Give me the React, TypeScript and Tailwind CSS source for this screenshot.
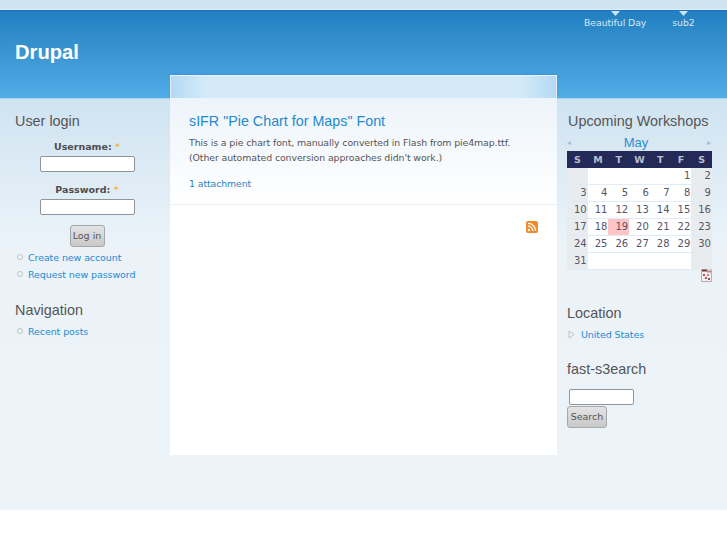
import React from "react";

const sans = "font-['Liberation_Sans',Arial,sans-serif]";
const dj = "font-['DejaVu_Sans',Verdana,sans-serif]";

function Bullet({ tri }: { tri?: boolean }) {
  return tri ? (
    <svg width="7" height="9" viewBox="0 0 7 9" className="shrink-0">
      <path d="M1 1 L6 4.5 L1 8 Z" fill="#f4f7f9" stroke="#b8c0c6" strokeWidth="1" />
    </svg>
  ) : (
    <span className="block w-[6px] h-[6px] rounded-full border border-[#bcc4c8] bg-[#eef4f8] shrink-0 -mt-[1px]" />
  );
}

function LinkItem({ children, tri }: { children: React.ReactNode; tri?: boolean }) {
  return (
    <div className="flex items-center h-[17px] pb-[1px]">
      <div className={tri ? "w-[13px] flex justify-start" : "w-[13px] flex justify-start pl-[2px]"}><Bullet tri={tri} /></div>
      <a className="text-[#1f8ad2] text-[9.5px] tracking-[-0.1px] leading-[15px] whitespace-nowrap">{children}</a>
    </div>
  );
}

function Heading({ children, cls = "" }: { children: React.ReactNode; cls?: string }) {
  return <h2 className={`${sans} text-[14.4px] leading-[18px] text-[#555] whitespace-nowrap ${cls}`}>{children}</h2>;
}

function Nav({ label, cls = "" }: { label: string; cls?: string }) {
  return (
    <div className={`flex flex-col items-center w-max ${cls}`}>
      <svg width="9" height="5" viewBox="0 0 9 5">
        <path d="M0 0 H9 L4.5 5 Z" fill="#cfe3f1" />
      </svg>
      <span className={`${dj} text-[9.3px] tracking-[-0.05px] leading-[13px] text-[#d6e8f5] whitespace-nowrap`}>{label}</span>
    </div>
  );
}

const weeks: (number | null)[][] = [
  [null, null, null, null, null, 1, 2],
  [3, 4, 5, 6, 7, 8, 9],
  [10, 11, 12, 13, 14, 15, 16],
  [17, 18, 19, 20, 21, 22, 23],
  [24, 25, 26, 27, 28, 29, 30],
  [31, null, null, null, null, null, null],
];

function Calendar() {
  return (
    <div className="w-[145px] ml-[10px]">
      <div className="flex items-center justify-between h-[17px]">
        <span className="text-[#9cc4de] text-[8px]">◂</span>
        <span className={`${sans} text-[#2a8fd0] text-[13px] leading-[17px] mr-[6px]`}>May</span>
        <span className="text-[#9cc4de] text-[8px] mr-[1px]">▸</span>
      </div>
      <div className="grid grid-cols-7 bg-[#232a58] h-[17px]">
        {["S", "M", "T", "W", "T", "F", "S"].map((d, i) => (
          <div key={i} className="text-center text-[9.5px] font-bold leading-[17px] text-[#b9bdcf]">{d}</div>
        ))}
      </div>
      {weeks.map((w, r) => (
        <div key={r} className="grid grid-cols-7 h-[17px] border-b border-[#dfecf6]">
          {w.map((d, i) => (
            <div
              key={i}
              className={`text-right pr-[1px] text-[10px] leading-[16px] text-[#55556a] ${
                d === 19 ? "bg-[#ffc4c4]" : i === 0 || i === 6 ? "bg-[#e9ecef]" : "bg-white"
              }`}
            >
              {d}
            </div>
          ))}
        </div>
      ))}
    </div>
  );
}

function IcalIcon() {
  return (
    <svg width="11" height="13" viewBox="0 0 11 13">
      <rect x="0.5" y="1" width="10" height="11.5" fill="#f4eeee" stroke="#a09090" strokeWidth="0.7" />
      <rect x="1" y="0.5" width="5" height="2" fill="#6b3a3a" />
      <rect x="6" y="2" width="4" height="1.5" fill="#c97a7a" />
      <rect x="2" y="5" width="2" height="2" fill="#c94a4a" />
      <rect x="6" y="5" width="2" height="2" fill="#a88" />
      <rect x="4" y="8" width="2" height="2" fill="#c94a4a" />
      <rect x="7" y="9" width="2" height="2" fill="#855" />
    </svg>
  );
}

function RssIcon() {
  return (
    <svg width="12" height="12" viewBox="0 0 12 12">
      <rect width="12" height="12" rx="2" fill="#f08a2c" />
      <circle cx="3" cy="9" r="1.2" fill="#fff" />
      <path d="M2 5.2 A4.8 4.8 0 0 1 6.8 10" fill="none" stroke="#fff" strokeWidth="1.3" />
      <path d="M2 2.4 A7.6 7.6 0 0 1 9.6 10" fill="none" stroke="#fff" strokeWidth="1.3" />
    </svg>
  );
}

const inputCls = "block bg-white border border-[#8f9598] rounded-[2px] h-[16px]";
const btnCls = "block bg-gradient-to-b from-[#e4e4e4] to-[#c8c8c8] border border-[#a4a8aa] rounded-[3px] text-[9.5px] text-[#555]";

export default function App() {
  return (
    <div className={`${dj} w-[727px] h-[545px] bg-white overflow-hidden`}>
      <div className="h-[9px] bg-[#d0e3f0] border-b border-[#e2eff7] box-content" />
      <header className="h-[88px] bg-gradient-to-b from-[#2180c0] to-[#52ace6] border-t border-[#1f6fbd] flex">
        <h1 className={`${sans} text-white font-bold text-[20.2px] leading-[24px] ml-[15px] mt-[29px] w-[564px]`}>Drupal</h1>
        <Nav label="Beautiful Day" cls="ml-[5px]" />
        <Nav label="sub2" cls="ml-[26px]" />
      </header>
      <div className="h-[412px] bg-gradient-to-b from-[#cfe3f1] via-[#ebf3f9] via-35% to-[#ecf3f9] border-t border-[#a9d3ef] flex items-start">
        {/* left */}
        <aside className="w-[170px] shrink-0 pl-[15px] pt-[13px]">
          <Heading>User login</Heading>
          <div className="mt-[10px] w-[144px] flex flex-col items-center">
            <label className="text-[9.5px] font-bold leading-[13px] text-[#4d4d4d] whitespace-nowrap">
              Username: <span className="text-[#f5b63f]">*</span>
            </label>
            <input className={`${inputCls} w-[95px] mt-[3px]`} />
            <label className="text-[9.5px] font-bold leading-[13px] text-[#4d4d4d] whitespace-nowrap mt-[11px]">
              Password: <span className="text-[#f5b63f]">*</span>
            </label>
            <input className={`${inputCls} w-[95px] mt-[3px]`} />
            <button className={`${btnCls} w-[35px] h-[22px] mt-[10px]`}>Log in</button>
          </div>
          <div className="mt-[2px]">
            <LinkItem>Create new account</LinkItem>
            <LinkItem>Request new password</LinkItem>
          </div>
          <Heading cls="mt-[18px]">Navigation</Heading>
          <div className="mt-[4px]"><LinkItem>Recent posts</LinkItem></div>
        </aside>

        {/* center */}
        <main className="w-[387px] shrink-0 -mt-[24px] h-[380px] bg-white flex flex-col">
          <div className="h-[23px] bg-[linear-gradient(to_right,#b4d9f4,#d4eafa_9%,#d4eafa_91%,#b4d9f4)] border-t border-l border-r border-[#e6f2fb] shadow-[0_-1px_2px_#3f93dc] shrink-0" />
          <article className="h-[107px] bg-gradient-to-b from-[#edf4fa] to-white border-b border-[#edf1f4] pl-[19px] pt-[14px] shrink-0">
            <h2 className={`${sans} text-[14.3px] leading-[18px] text-[#1f8ad0] whitespace-nowrap`}>sIFR "Pie Chart for Maps" Font</h2>
            <p className="text-[9.4px] tracking-[-0.1px] leading-[14.5px] text-[#555] mt-[6px] whitespace-nowrap">
              This is a pie chart font, manually converted in Flash from pie4map.ttf.
              <br />
              (Other automated conversion approaches didn't work.)
            </p>
            <a className="block text-[9.4px] tracking-[-0.1px] leading-[15px] text-[#2b86c0] mt-[11px]">1 attachment</a>
          </article>
          <div className="flex justify-end pr-[19px] mt-[16px]"><RssIcon /></div>
        </main>

        {/* right */}
        <aside className="w-[170px] shrink-0 pt-[13px]">
          <Heading cls="ml-[11px]">Upcoming Workshops</Heading>
          <div className="mt-[4px]"><Calendar /></div>
          <div className="flex justify-end pr-[15px] -mt-[1px]"><IcalIcon /></div>
          <Heading cls="ml-[10px] mt-[22px]">Location</Heading>
          <div className="ml-[11px] mt-[4px]"><LinkItem tri>United States</LinkItem></div>
          <Heading cls="ml-[10px] mt-[17px]">fast-s3earch</Heading>
          <input className={`${inputCls} w-[65px] ml-[12px] mt-[11px]`} />
          <button className={`${btnCls} w-[40px] h-[22px] ml-[10px] mt-[1px]`}>Search</button>
        </aside>
      </div>
    </div>
  );
}
